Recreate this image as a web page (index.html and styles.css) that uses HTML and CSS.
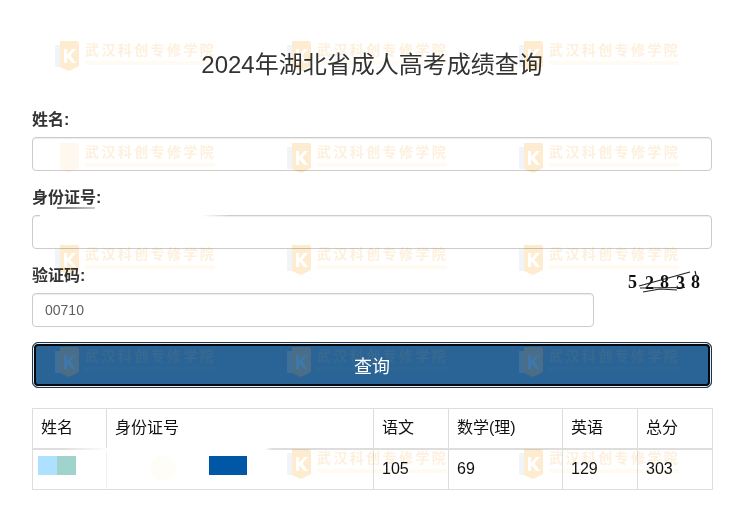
FILE: index.html
```html
<!DOCTYPE html>
<html lang="zh-CN">
<head>
<meta charset="utf-8">
<title>2024年湖北省成人高考成绩查询</title>
<link rel="stylesheet" href="styles.css">
</head>
<body>
<main class="page">
  <h1 class="title">2024年湖北省成人高考成绩查询</h1>
  <form class="form">
    <div class="field">
      <label class="label">姓名:</label>
      <input class="input" type="text">
    </div>
    <div class="field">
      <label class="label">身份证号:</label>
      <input class="input" type="text">
    </div>
    <div class="captcha-row">
      <div class="field captcha-field">
        <label class="label">验证码:</label>
        <input class="input" type="text" value="00710">
      </div>
      <svg class="captcha" width="80" height="30" viewBox="0 0 80 30" aria-label="5 2 8 3 8">
        <text class="digit" x="0" y="18">5</text>
        <text class="digit" x="17" y="19">2</text>
        <text class="digit" x="32" y="18">8</text>
        <text class="digit" x="48" y="19">3</text>
        <text class="digit" x="63" y="18">8</text>
        <path class="scratch" d="M11 16 L62 2"/>
        <path class="scratch" d="M12 18 L57 17.5"/>
        <path class="scratch" d="M15 22 L32 19 L49 20"/>
        <path class="scratch" d="M67 1 L68 5"/>
      </svg>
    </div>
    <button class="submit" type="button"><span class="submit-text">查询</span></button>
  </form>
  <table class="scores">
    <colgroup>
      <col class="col-name"><col class="col-id"><col class="col-sub"><col class="col-math"><col class="col-sub"><col class="col-sub">
    </colgroup>
    <thead>
      <tr><th>姓名</th><th>身份证号</th><th>语文</th><th>数学(理)</th><th>英语</th><th>总分</th></tr>
    </thead>
    <tbody>
      <tr><td></td><td></td><td>105</td><td>69</td><td>129</td><td>303</td></tr>
    </tbody>
  </table>

  <div class="watermarks" aria-hidden="true">
    <div class="mark"><svg class="shield" viewBox="0 0 24 32"><path class="shield-edge" d="M0 5 H5 V27 H0 Z"/><path class="shield-bg" d="M5 1 H22 Q24 1 24 4 V26 L14 31 L5 27 Z"/><path class="shield-k" d="M9 9 H12 V15 L17 9 H21 L15.5 15.5 L21 23 H17 L12 17 V23 H9 Z"/></svg><div class="mark-body"><span class="mark-name">武汉科创专修学院</span><span class="mark-sub"></span></div></div>
    <div class="mark"><svg class="shield" viewBox="0 0 24 32"><path class="shield-edge" d="M0 5 H5 V27 H0 Z"/><path class="shield-bg" d="M5 1 H22 Q24 1 24 4 V26 L14 31 L5 27 Z"/><path class="shield-k" d="M9 9 H12 V15 L17 9 H21 L15.5 15.5 L21 23 H17 L12 17 V23 H9 Z"/></svg><div class="mark-body"><span class="mark-name">武汉科创专修学院</span><span class="mark-sub"></span></div></div>
    <div class="mark"><svg class="shield" viewBox="0 0 24 32"><path class="shield-edge" d="M0 5 H5 V27 H0 Z"/><path class="shield-bg" d="M5 1 H22 Q24 1 24 4 V26 L14 31 L5 27 Z"/><path class="shield-k" d="M9 9 H12 V15 L17 9 H21 L15.5 15.5 L21 23 H17 L12 17 V23 H9 Z"/></svg><div class="mark-body"><span class="mark-name">武汉科创专修学院</span><span class="mark-sub"></span></div></div>

    <div class="mark mark-washed"><svg class="shield" viewBox="0 0 24 32"><path class="shield-bg" d="M5 1 H22 Q24 1 24 4 V26 L14 31 L5 27 Z"/></svg><div class="mark-body"><span class="mark-name">武汉科创专修学院</span><span class="mark-sub"></span></div></div>
    <div class="mark"><svg class="shield" viewBox="0 0 24 32"><path class="shield-edge" d="M0 5 H5 V27 H0 Z"/><path class="shield-bg" d="M5 1 H22 Q24 1 24 4 V26 L14 31 L5 27 Z"/><path class="shield-k" d="M9 9 H12 V15 L17 9 H21 L15.5 15.5 L21 23 H17 L12 17 V23 H9 Z"/></svg><div class="mark-body"><span class="mark-name">武汉科创专修学院</span><span class="mark-sub"></span></div></div>
    <div class="mark"><svg class="shield" viewBox="0 0 24 32"><path class="shield-edge" d="M0 5 H5 V27 H0 Z"/><path class="shield-bg" d="M5 1 H22 Q24 1 24 4 V26 L14 31 L5 27 Z"/><path class="shield-k" d="M9 9 H12 V15 L17 9 H21 L15.5 15.5 L21 23 H17 L12 17 V23 H9 Z"/></svg><div class="mark-body"><span class="mark-name">武汉科创专修学院</span><span class="mark-sub"></span></div></div>

    <div class="mark"><svg class="shield" viewBox="0 0 24 32"><path class="shield-edge" d="M0 5 H5 V27 H0 Z"/><path class="shield-bg" d="M5 1 H22 Q24 1 24 4 V26 L14 31 L5 27 Z"/><path class="shield-k" d="M9 9 H12 V15 L17 9 H21 L15.5 15.5 L21 23 H17 L12 17 V23 H9 Z"/></svg><div class="mark-body"><span class="mark-name">武汉科创专修学院</span><span class="mark-sub"></span></div></div>
    <div class="mark"><svg class="shield" viewBox="0 0 24 32"><path class="shield-edge" d="M0 5 H5 V27 H0 Z"/><path class="shield-bg" d="M5 1 H22 Q24 1 24 4 V26 L14 31 L5 27 Z"/><path class="shield-k" d="M9 9 H12 V15 L17 9 H21 L15.5 15.5 L21 23 H17 L12 17 V23 H9 Z"/></svg><div class="mark-body"><span class="mark-name">武汉科创专修学院</span><span class="mark-sub"></span></div></div>
    <div class="mark"><svg class="shield" viewBox="0 0 24 32"><path class="shield-edge" d="M0 5 H5 V27 H0 Z"/><path class="shield-bg" d="M5 1 H22 Q24 1 24 4 V26 L14 31 L5 27 Z"/><path class="shield-k" d="M9 9 H12 V15 L17 9 H21 L15.5 15.5 L21 23 H17 L12 17 V23 H9 Z"/></svg><div class="mark-body"><span class="mark-name">武汉科创专修学院</span><span class="mark-sub"></span></div></div>

    <div class="mark mark-dark"><svg class="shield" viewBox="0 0 24 32"><path class="shield-edge" d="M0 5 H5 V27 H0 Z"/><path class="shield-bg" d="M5 1 H22 Q24 1 24 4 V26 L14 31 L5 27 Z"/><path class="shield-k" d="M9 9 H12 V15 L17 9 H21 L15.5 15.5 L21 23 H17 L12 17 V23 H9 Z"/></svg><div class="mark-body"><span class="mark-name">武汉科创专修学院</span><span class="mark-sub"></span></div></div>
    <div class="mark mark-dark"><svg class="shield" viewBox="0 0 24 32"><path class="shield-edge" d="M0 5 H5 V27 H0 Z"/><path class="shield-bg" d="M5 1 H22 Q24 1 24 4 V26 L14 31 L5 27 Z"/><path class="shield-k" d="M9 9 H12 V15 L17 9 H21 L15.5 15.5 L21 23 H17 L12 17 V23 H9 Z"/></svg><div class="mark-body"><span class="mark-name">武汉科创专修学院</span><span class="mark-sub"></span></div></div>
    <div class="mark mark-dark"><svg class="shield" viewBox="0 0 24 32"><path class="shield-edge" d="M0 5 H5 V27 H0 Z"/><path class="shield-bg" d="M5 1 H22 Q24 1 24 4 V26 L14 31 L5 27 Z"/><path class="shield-k" d="M9 9 H12 V15 L17 9 H21 L15.5 15.5 L21 23 H17 L12 17 V23 H9 Z"/></svg><div class="mark-body"><span class="mark-name">武汉科创专修学院</span><span class="mark-sub"></span></div></div>

    <div class="mark mark-hidden"></div>
    <div class="mark"><svg class="shield" viewBox="0 0 24 32"><path class="shield-edge" d="M0 5 H5 V27 H0 Z"/><path class="shield-bg" d="M5 1 H22 Q24 1 24 4 V26 L14 31 L5 27 Z"/><path class="shield-k" d="M9 9 H12 V15 L17 9 H21 L15.5 15.5 L21 23 H17 L12 17 V23 H9 Z"/></svg><div class="mark-body"><span class="mark-name">武汉科创专修学院</span><span class="mark-sub"></span></div></div>
    <div class="mark"><svg class="shield" viewBox="0 0 24 32"><path class="shield-edge" d="M0 5 H5 V27 H0 Z"/><path class="shield-bg" d="M5 1 H22 Q24 1 24 4 V26 L14 31 L5 27 Z"/><path class="shield-k" d="M9 9 H12 V15 L17 9 H21 L15.5 15.5 L21 23 H17 L12 17 V23 H9 Z"/></svg><div class="mark-body"><span class="mark-name">武汉科创专修学院</span><span class="mark-sub"></span></div></div>
  </div>

  <!-- redaction marks that sit over the form and the table -->
  <div class="redact redact-id-border"></div>
  <div class="redact redact-smudge"></div>
  <div class="redact redact-row"></div>
  <div class="redact redact-name-line"></div>
  <div class="redact redact-cell-line"></div>
  <div class="redact redact-blob"></div>
  <div class="redact redact-swatch-a"></div>
  <div class="redact redact-swatch-b"></div>
  <div class="redact redact-swatch-c"></div>
</main>
</body>
</html>
```

FILE: styles.css
```css
* { box-sizing: border-box; }

html, body { margin: 0; background: #fff; }

body {
  font-family: "Liberation Sans", "Noto Sans CJK SC", sans-serif;
  font-size: 16px;
  color: #333;
}

.page {
  position: relative;
  width: 735px;
  height: 518px;
  overflow: hidden;
  padding: 0 23px 0 32px;
}

.title {
  margin: 0;
  padding-top: 48px;
  font-size: 24px;
  font-weight: 400;
  line-height: 34px;
  text-align: center;
}

.form {
  margin-top: 26px;
  display: flex;
  flex-direction: column;
  gap: 15px;
}

.field {
  display: flex;
  flex-direction: column;
}

.label {
  height: 29px;
  font-size: 16px;
  font-weight: 700;
  line-height: 23px;
}

.input {
  width: 100%;
  height: 34px;
  padding: 6px 12px;
  border: 1px solid #ccc;
  border-radius: 4px;
  background: transparent;
  font: 14px/20px "Liberation Sans", sans-serif;
  color: #5f5f5f;
  box-shadow: inset 0 1px 1px rgba(0, 0, 0, 0.075);
}

.captcha-row {
  display: flex;
  align-items: flex-start;
  justify-content: space-between;
}

.captcha-field { width: 562px; }

.captcha {
  display: block;
  margin: 6px 4px 0 0;
}

.digit {
  font-family: "Liberation Serif", serif;
  font-size: 18px;
  font-weight: 700;
  fill: #111;
}

.scratch {
  fill: none;
  stroke: #222;
  stroke-width: 1.2;
}

.submit {
  display: block;
  width: 100%;
  height: 46px;
  padding: 3px 0 0;
  border: 1px solid #1d3448;
  border-radius: 6px;
  background: #2a6496;
  color: #fff;
  font: 18px/24px "Liberation Sans", "Noto Sans CJK SC", sans-serif;
  box-shadow: inset 0 0 0 1px #e8eef2, inset 0 0 0 3px #05090d;
}

.submit-text {
  position: relative;
  z-index: 3;
}

.scores {
  width: 680px;
  margin-top: 20px;
  border-collapse: collapse;
  table-layout: fixed;
  color: #111;
}

.col-name { width: 74px; }
.col-id { width: 267px; }
.col-sub { width: 75px; }
.col-math { width: 114px; }

.scores th,
.scores td {
  padding: 7px 8px 9px;
  border: 1px solid #ddd;
  font-size: 16px;
  font-weight: 400;
  line-height: 23px;
  text-align: left;
  vertical-align: top;
}

.scores th { border-bottom-width: 2px; }

/* free-floating watermark tiles stamped over the page */
.watermarks {
  position: absolute;
  top: 40px;
  left: 55px;
  display: grid;
  grid-template-columns: repeat(3, 232px);
  grid-auto-rows: 102px;
  pointer-events: none;
}

.mark {
  display: flex;
  align-items: flex-start;
  gap: 6px;
  height: 32px;
  mix-blend-mode: multiply;
  filter: blur(0.7px);
}

.shield {
  width: 24px;
  height: 32px;
  flex: none;
}

.shield-edge { fill: #f1f5f9; }
.shield-bg { fill: #fdeccf; }
.shield-k { fill: #fff; }

.mark-body {
  display: flex;
  flex-direction: column;
  gap: 2px;
  padding-top: 1px;
}

.mark-name {
  font-size: 14px;
  font-weight: 700;
  line-height: 18px;
  letter-spacing: 2.4px;
  color: #fdf0dd;
  white-space: nowrap;
}

.mark-sub {
  width: 130px;
  height: 4px;
  background: #fffbf3;
}

.mark-washed .shield-bg { fill: #fff8ee; }

.mark-dark { mix-blend-mode: normal; }
.mark-dark .shield-edge { fill: #3e7099; }
.mark-dark .shield-bg { fill: #4a6e88; }
.mark-dark .shield-k { fill: #3d78ab; }
.mark-dark .mark-name { color: #386a90; }
.mark-dark .mark-sub { background: #2c6694; }

.mark-hidden { visibility: hidden; }

.redact { position: absolute; }

.redact-id-border {
  top: 214px;
  left: 40px;
  width: 190px;
  height: 3px;
  background: linear-gradient(90deg, #fff 85%, rgba(255, 255, 255, 0));
}

.redact-smudge {
  top: 207px;
  left: 57px;
  width: 38px;
  height: 2px;
  background: linear-gradient(90deg, #777, #ccc);
}

.redact-row {
  top: 448px;
  left: 108px;
  width: 164px;
  height: 41px;
  background: linear-gradient(90deg, #fff 96%, rgba(255, 255, 255, 0));
}

.redact-name-line {
  top: 448px;
  left: 60px;
  width: 48px;
  height: 3px;
  background: linear-gradient(90deg, rgba(255, 255, 255, 0), #fff);
}

.redact-cell-line {
  top: 451px;
  left: 105px;
  width: 3px;
  height: 38px;
  background: rgba(255, 255, 255, 0.6);
}

.redact-blob {
  top: 455px;
  left: 150px;
  width: 26px;
  height: 26px;
  border-radius: 50%;
  background: #fffdf8;
}

.redact-swatch-a,
.redact-swatch-b,
.redact-swatch-c {
  top: 456px;
  height: 19px;
}

.redact-swatch-a { left: 38px; width: 19px; background: #aee0ff; }
.redact-swatch-b { left: 57px; width: 19px; background: #9fd3cc; }
.redact-swatch-c { left: 209px; width: 38px; background: #0057a6; }
```
